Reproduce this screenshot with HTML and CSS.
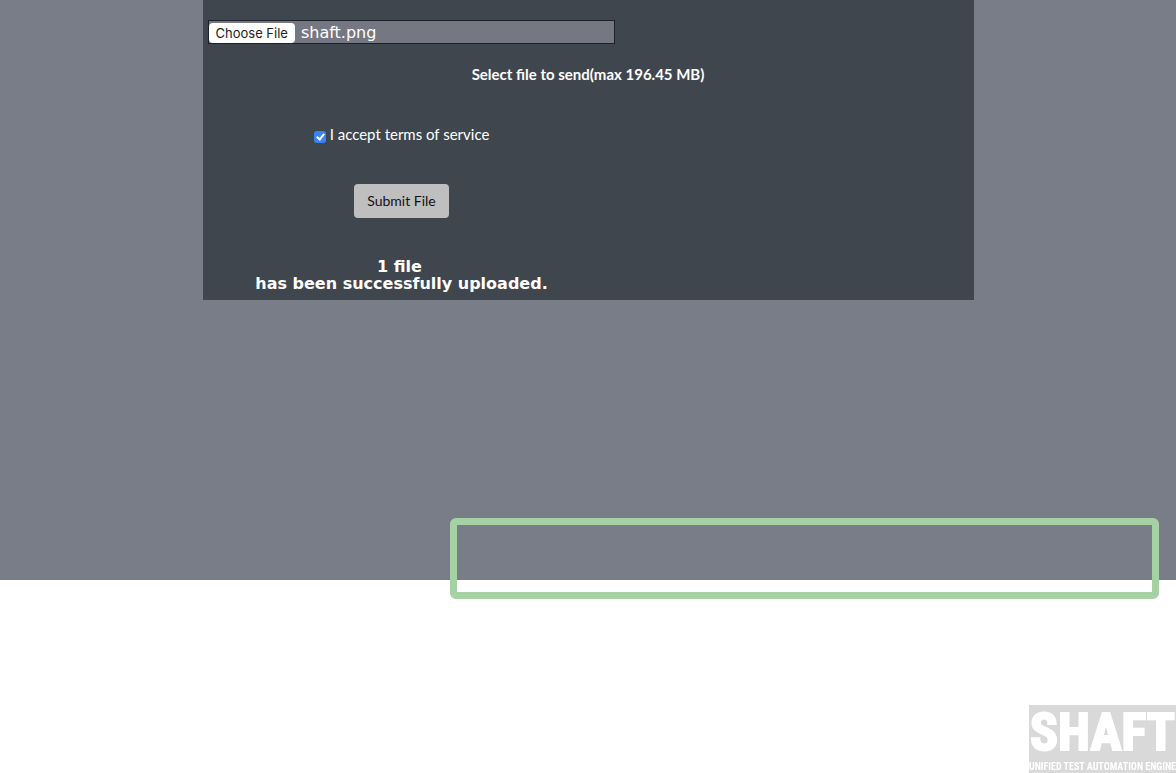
FILE: index.html
```html
<!DOCTYPE html>
<html lang="en">
<head>
  <meta charset="utf-8">
  <title>File upload</title>
  <link rel="stylesheet" href="styles.css">
</head>
<body>
  <main class="page">
    <form class="panel">
      <input class="file" id="file" type="file" aria-label="File to send">
      <label class="hint" for="file">Select file to send(max 196.45 MB)</label>
      <div class="actions">
        <label class="terms"><input class="tick" type="checkbox" checked><span>I accept terms of service</span></label>
        <button class="submit" type="button">Submit File</button>
        <div class="result">
          <div class="count">1 file</div>
          <div>has been successfully uploaded.</div>
        </div>
      </div>
    </form>
  </main>
  <div class="highlight"></div>
  <div class="logo">
    <span class="logo-name">SHAFT</span>
    <span class="logo-tag">UNIFIED TEST AUTOMATION ENGINE</span>
  </div>
  <script src="script.js"></script>
</body>
</html>
```
FILE: styles.css
```css
* {
  box-sizing: border-box;
}

body {
  margin: 0;
  background: #fff;
  font-family: Lato, sans-serif;
}

.page {
  min-height: 580px;
  background: #797d87;
}

.panel {
  display: flex;
  flex-direction: column;
  max-width: 771px;
  margin: 0 auto;
  padding: 20px 5px 8px;
  background: #3f464e;
  color: #fff;
}

.file {
  width: 407px;
  max-width: 100%;
  height: 24px;
  border: 1px solid #1c222a;
  background: #757783;
  color: #fff;
  font: 16px/20px "DejaVu Sans", sans-serif;
}

.file::file-selector-button {
  height: 20px;
  margin: 2px 6px 0 0;
  padding: 0 7px;
  border: 0;
  border-radius: 4px;
  background: #fff;
  color: #222;
  font: 13px/20px Inter, sans-serif;
}

.hint {
  margin-top: 20px;
  text-align: center;
  font-size: 15px;
  font-weight: 700;
  line-height: 20px;
}

.actions {
  display: flex;
  flex-direction: column;
  align-items: center;
  width: 388px;
  max-width: 100%;
  margin-top: 40px;
}

.terms {
  display: flex;
  align-items: center;
  gap: 4px;
  font-size: 15px;
  line-height: 20px;
}

.tick {
  appearance: none;
  width: 12px;
  height: 12px;
  margin: 5px 0 0;
  border-radius: 3px;
  background: #3b82f6;
}

.tick:checked::before {
  content: "";
  display: block;
  box-sizing: border-box;
  width: 5px;
  height: 8px;
  margin: 1px 4px;
  border: solid #fff;
  border-width: 0 2px 2px 0;
  transform: rotate(40deg);
}

.submit {
  height: 34px;
  margin-top: 40px;
  padding: 0 13px;
  border: 0;
  border-radius: 4px;
  background: #c0bfc0;
  color: #111;
  font: 14px/20px Lato, sans-serif;
}

.result {
  margin-top: 40px;
  font: bold 16px/17px "DejaVu Sans", sans-serif;
  text-align: center;
  white-space: nowrap;
}

.count {
  padding-right: 4px;
}

.highlight {
  position: absolute;
  top: 518px;
  right: 17px;
  left: 450px;
  height: 81px;
  border: 7px solid #a5d1a5;
  border-radius: 6px;
}

.logo {
  position: fixed;
  right: 0;
  bottom: 0;
  display: flex;
  flex-direction: column;
  align-items: center;
  justify-content: flex-end;
  width: 147px;
  height: 68px;
  background: #d9d9d9;
  color: #fff;
  font-family: "Roboto Condensed", Roboto, sans-serif;
  font-weight: 700;
  white-space: nowrap;
}

.logo-name {
  font-size: 52px;
  line-height: 56px;
  -webkit-text-stroke: 2px #fff;
}

.logo-tag {
  font-size: 10px;
  line-height: 12px;
}
```
FILE: script.js
```js
const transfer = new DataTransfer();
transfer.items.add(new File([""], "shaft.png", { type: "image/png" }));
document.getElementById("file").files = transfer.files;
```
